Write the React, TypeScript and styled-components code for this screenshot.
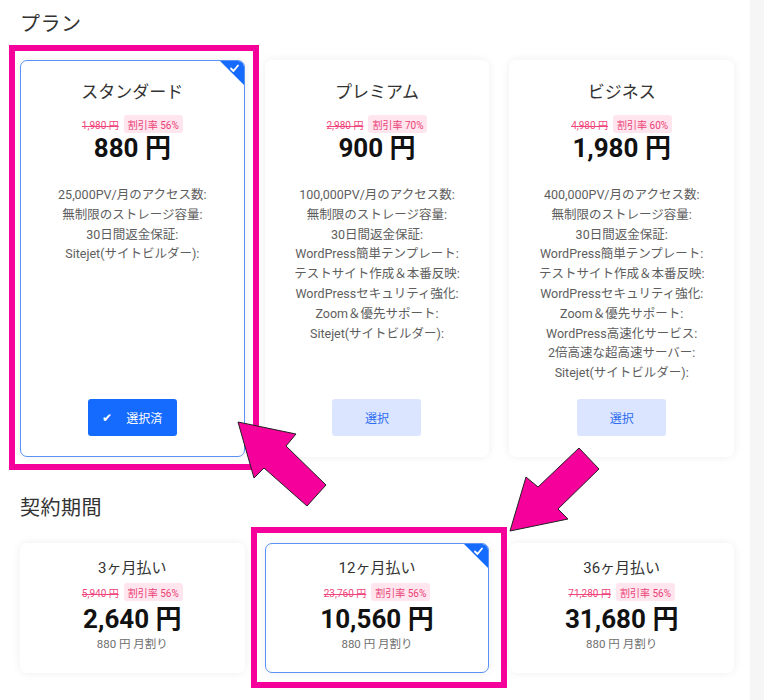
import styled, { createGlobalStyle } from 'styled-components';

const GlobalStyle = createGlobalStyle`
  html, body {
    margin: 0;
    padding: 0;
    background: #ffffff;
  }
  body {
    font-family: Roboto, "Noto Sans CJK JP", sans-serif;
  }
`;

const Page = styled.div`
  position: relative;
  width: 764px;
  height: 700px;
  box-sizing: border-box;
  padding: 10px 30px 0 20px;
  overflow: hidden;
  background: linear-gradient(to right, #ffffff 750px, #f6f6f6 750px);
`;

const Heading = styled.h2<{ $top: number }>`
  margin: ${(p) => p.$top}px 0 0 0;
  font-size: 20px;
  line-height: 28px;
  font-weight: 400;
  color: #333333;
  letter-spacing: 0.5px;
`;

const Grid = styled.div<{ $top: number }>`
  display: grid;
  grid-template-columns: repeat(3, 1fr);
  gap: 20px;
  margin-top: ${(p) => p.$top}px;
`;

const Card = styled.div<{ $active?: boolean; $tall?: boolean }>`
  position: relative;
  display: flex;
  flex-direction: column;
  align-items: center;
  box-sizing: border-box;
  background: #ffffff;
  border-radius: 7px;
  border: 1px solid ${(p) => (p.$active ? '#5b93f5' : 'transparent')};
  box-shadow: 0 0 10px rgba(0, 0, 0, 0.07);
  overflow: hidden;
  padding: ${(p) => (p.$tall ? '19px 16px 20px' : '12px 16px 0')};
  height: ${(p) => (p.$tall ? '397px' : '130px')};
`;

const Corner = styled.svg`
  position: absolute;
  top: 0;
  right: 0;
`;

const PlanName = styled.div<{ $size: number }>`
  font-size: ${(p) => p.$size}px;
  line-height: 24px;
  color: #333333;
`;

const PriceRow = styled.div<{ $top: number }>`
  display: flex;
  align-items: center;
  gap: 5px;
  margin-top: ${(p) => p.$top}px;
  height: 18px;
`;

const OldPrice = styled.span`
  font-size: 10px;
  color: #f0457c;
  text-decoration: line-through;
`;

const Badge = styled.span`
  display: inline-flex;
  align-items: center;
  height: 18px;
  padding: 0 4px;
  border-radius: 3px;
  background: #ffe6ee;
  color: #ea3f76;
  font-size: 10px;
`;

const Price = styled.div<{ $top?: number }>`
  margin-top: ${(p) => p.$top ?? 0}px;
  font-size: 26px;
  line-height: 30px;
  font-weight: 700;
  color: #111111;
`;

const Features = styled.ul`
  list-style: none;
  margin: 22px 0 0;
  padding: 0;
  text-align: center;
  font-size: 12.5px;
  line-height: 19.8px;
  color: #5e5e5e;
  white-space: nowrap;
`;

const Button = styled.button<{ $active?: boolean }>`
  margin-top: auto;
  width: 89px;
  height: 37px;
  border: none;
  border-radius: 3px;
  display: flex;
  align-items: center;
  justify-content: center;
  gap: 14px;
  font-family: inherit;
  font-size: 12px;
  background: ${(p) => (p.$active ? '#166bff' : '#dbe5ff')};
  color: ${(p) => (p.$active ? '#ffffff' : '#2e6cf0')};
`;

const Monthly = styled.div`
  font-size: 11.5px;
  line-height: 16px;
  color: #6f6f6f;
  margin-top: 2px;
`;

const Frame = styled.div<{ $x: number; $y: number; $w: number; $h: number }>`
  position: absolute;
  left: ${(p) => p.$x}px;
  top: ${(p) => p.$y}px;
  width: ${(p) => p.$w}px;
  height: ${(p) => p.$h}px;
  box-sizing: border-box;
  border: 6px solid #f5009b;
  pointer-events: none;
`;

const Arrows = styled.svg`
  position: absolute;
  left: 0;
  top: 0;
  pointer-events: none;
`;

const CheckCorner = () => (
  <Corner width="24" height="24" viewBox="0 0 24 24">
    <polygon points="0,0 24,0 24,24" fill="#166bff" />
    <path d="M11 7.5 L13.5 10 L18 4.5" stroke="#fff" strokeWidth="1.8" fill="none" strokeLinecap="round" strokeLinejoin="round" />
  </Corner>
);

const plans = [
  {
    name: 'スタンダード', old: '1,980 円', rate: '56%', price: '880 円', active: true,
    features: ['25,000PV/月のアクセス数:', '無制限のストレージ容量:', '30日間返金保証:', 'Sitejet(サイトビルダー):'],
  },
  {
    name: 'プレミアム', old: '2,980 円', rate: '70%', price: '900 円',
    features: ['100,000PV/月のアクセス数:', '無制限のストレージ容量:', '30日間返金保証:', 'WordPress簡単テンプレート:', 'テストサイト作成＆本番反映:', 'WordPressセキュリティ強化:', 'Zoom＆優先サポート:', 'Sitejet(サイトビルダー):'],
  },
  {
    name: 'ビジネス', old: '4,980 円', rate: '60%', price: '1,980 円',
    features: ['400,000PV/月のアクセス数:', '無制限のストレージ容量:', '30日間返金保証:', 'WordPress簡単テンプレート:', 'テストサイト作成＆本番反映:', 'WordPressセキュリティ強化:', 'Zoom＆優先サポート:', 'WordPress高速化サービス:', '2倍高速な超高速サーバー:', 'Sitejet(サイトビルダー):'],
  },
];

const periods = [
  { name: '3ヶ月払い', old: '5,940 円', price: '2,640 円' },
  { name: '12ヶ月払い', old: '23,760 円', price: '10,560 円', active: true },
  { name: '36ヶ月払い', old: '71,280 円', price: '31,680 円' },
];

export default function App() {
  return (
    <>
      <GlobalStyle />
      <Page>
        <Heading $top={0}>プラン</Heading>
        <Grid $top={22}>
          {plans.map((p) => (
            <Card key={p.name} $active={p.active} $tall>
              {p.active && <CheckCorner />}
              <PlanName $size={17}>{p.name}</PlanName>
              <PriceRow $top={11}>
                <OldPrice>{p.old}</OldPrice>
                <Badge>割引率 {p.rate}</Badge>
              </PriceRow>
              <Price>{p.price}</Price>
              <Features>
                {p.features.map((f) => (
                  <li key={f}>{f}</li>
                ))}
              </Features>
              {p.active ? (
                <Button $active>
                  <span>✔</span>
                  <span>選択済</span>
                </Button>
              ) : (
                <Button>選択</Button>
              )}
            </Card>
          ))}
        </Grid>

        <Heading $top={37}>契約期間</Heading>
        <Grid $top={21}>
          {periods.map((p) => (
            <Card key={p.name} $active={p.active}>
              {p.active && <CheckCorner />}
              <PlanName $size={15}>{p.name}</PlanName>
              <PriceRow $top={3}>
                <OldPrice>{p.old}</OldPrice>
                <Badge>割引率 56%</Badge>
              </PriceRow>
              <Price $top={3}>{p.price}</Price>
              <Monthly>880 円 月割り</Monthly>
            </Card>
          ))}
        </Grid>

        <Frame $x={9} $y={45} $w={250} $h={425} />
        <Frame $x={251} $y={527} $w={256} $h={161} />
        <Arrows width="764" height="700" viewBox="0 0 764 700">
          <polygon
            points="238,422 296,434 286,446 326,485 307,506 264,468 254,478"
            fill="#f5009b"
            stroke="#222"
            strokeWidth="1"
            strokeLinejoin="miter"
          />
          <polygon
            points="510,531 526,477 538,487 579,448 599,469 558,509 568,519"
            fill="#f5009b"
            stroke="#222"
            strokeWidth="1"
            strokeLinejoin="miter"
          />
        </Arrows>
      </Page>
    </>
  );
}
